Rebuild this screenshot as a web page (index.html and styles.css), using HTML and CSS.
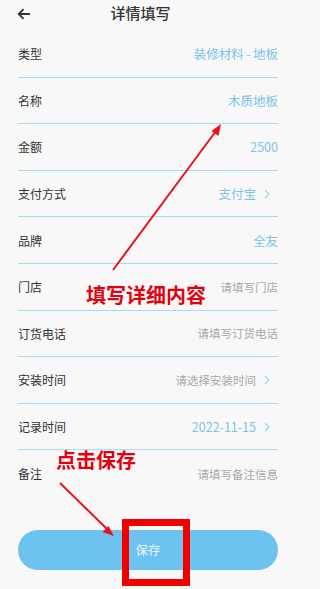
FILE: index.html
```html
<!DOCTYPE html>
<html lang="zh-CN">
<head>
<meta charset="utf-8">
<link rel="stylesheet" href="styles.css">
</head>
<body>
<div class="page">
  <header class="topbar">
    <svg class="back" width="14" height="12" viewBox="0 0 14 12"><path d="M13 6H2M6.5 1.2L1.7 6l4.8 4.8" fill="none" stroke="#333" stroke-width="1.8"/></svg>
    <div class="title">详情填写</div>
  </header>
  <div class="form">
    <div class="row"><span class="label">类型</span><span class="value">装修材料<span class="dash">-</span>地板</span></div>
    <div class="row"><span class="label">名称</span><span class="value">木质地板</span></div>
    <div class="row"><span class="label">金额</span><span class="value">2500</span></div>
    <div class="row"><span class="label">支付方式</span><span class="value">支付宝<svg class="chev" width="6" height="10" viewBox="0 0 6 10"><path d="M1 1l4 4-4 4" fill="none" stroke="#9fd3ee" stroke-width="1.2"/></svg></span></div>
    <div class="row"><span class="label">品牌</span><span class="value">全友</span></div>
    <div class="row"><span class="label">门店</span><span class="ph">请填写门店</span></div>
    <div class="row"><span class="label">订货电话</span><span class="ph">请填写订货电话</span></div>
    <div class="row"><span class="label">安装时间</span><span class="ph">请选择安装时间<svg class="chev" width="6" height="10" viewBox="0 0 6 10"><path d="M1 1l4 4-4 4" fill="none" stroke="#9fd3ee" stroke-width="1.2"/></svg></span></div>
    <div class="row"><span class="label">记录时间</span><span class="value">2022-11-15<svg class="chev" width="6" height="10" viewBox="0 0 6 10"><path d="M1 1l4 4-4 4" fill="none" stroke="#9fd3ee" stroke-width="1.2"/></svg></span></div>
    <div class="row last"><span class="label">备注</span><span class="ph">请填写备注信息</span></div>
  </div>
  <div class="btnwrap"><div class="save">保存</div></div>

  <div class="note note1">填写详细内容</div>
  <div class="note note2">点击保存</div>
  <svg class="arrows" width="297" height="589" viewBox="0 0 297 589">
    <line x1="113" y1="270" x2="216" y2="131" stroke="#e8141a" stroke-width="2"/>
    <path d="M221 124l-2.5 12-7-5z" fill="#e8141a"/>
    <line x1="60" y1="483" x2="108" y2="530" stroke="#e8141a" stroke-width="2"/>
    <path d="M114 536l-11.5-4 6-6z" fill="#e8141a"/>
  </svg>
  <div class="redbox"></div>
</div>
</body>
</html>
```
FILE: styles.css
```css
* { box-sizing: border-box; }
html, body { margin: 0; padding: 0; }
body {
  background: #f8f8f8;
  font-family: "Noto Sans CJK SC", "Noto Sans", sans-serif;
  width: 297px;
  height: 589px;
  overflow: hidden;
}
.page { position: relative; width: 297px; height: 589px; }
.topbar {
  height: 31px;
  display: flex;
  align-items: center;
  position: relative;
  padding: 0 0 4px 17px;
}
.back { display: block; }
.title {
  position: absolute;
  left: 0; right: 0; top: 4px;
  text-align: center;
  font-size: 15px;
  line-height: 18px;
  color: #333;
  font-weight: 500;
  padding-right: 16px;
}
.form { padding: 0 19px 0 18px; }
.row {
  height: 46.6px;
  border-bottom: 1px solid #acdaee;
  display: flex;
  justify-content: space-between;
  align-items: center;
}
.row.last { border-bottom: none; }
.label { color: #333; font-size: 12px; }
.value, .ph { display: flex; align-items: center; }
.value { color: #7cc3e8; font-size: 12.5px; }
.dash { margin: 0 2.5px; }
.ph { color: #a8a8a8; font-size: 11.5px; }
.chev { margin-left: 8px; margin-right: 8px; }
.btnwrap { padding: 33px 19px 0 18px; }
.save {
  height: 40px;
  border-radius: 20px;
  background: #6dc2ef;
  color: #eaf6fd;
  font-size: 12.5px;
  display: flex;
  align-items: center;
  justify-content: center;
}
.note {
  position: absolute;
  color: #e4000f;
  font-weight: 700;
  font-size: 20px;
  line-height: 24px;
  white-space: nowrap;
}
.note1 { left: 86px; top: 283px; }
.note2 { left: 56px; top: 448px; }
.arrows { position: absolute; left: 0; top: 0; pointer-events: none; }
.redbox {
  position: absolute;
  left: 122px; top: 519px;
  width: 68px; height: 67px;
  border: 7px solid #f20000;
}
```
